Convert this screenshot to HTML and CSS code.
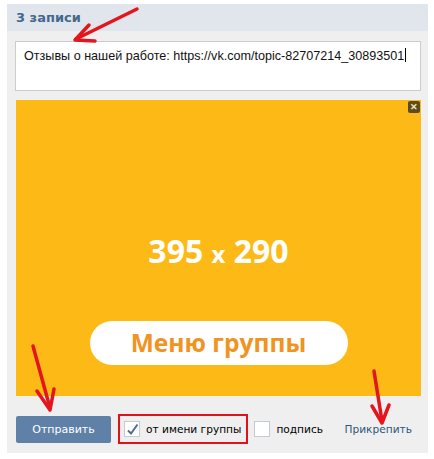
FILE: index.html
```html
<!DOCTYPE html>
<html>
  <head>
    <meta charset="utf-8">
    <title>3 записи</title>
    <link rel="stylesheet" href="styles.css">
  </head>
  <body>
    <div class="panel">
      <div class="panel-head">3 записи</div>
      <div class="panel-body">
        <div class="post-field">Отзывы о нашей работе: https://vk.com/topic-82707214_30893501<span class="caret"></span></div>

        <div class="attach">
          <span class="attach-close">&#x2715;</span>
          <div class="attach-size">395 <span class="attach-x">x</span> 290</div>
          <div class="attach-pill">Меню группы</div>
        </div>

        <div class="controls">
          <button type="button" class="btn-send">Отправить</button>
          <label class="check check-marked">
            <span class="check-box">
              <svg width="15" height="15" viewBox="0 0 15 15"><path d="M3 8.5 L6 11.5 L12.5 2.5" fill="none" stroke="#4b6f99" stroke-width="2"/></svg>
            </span>
            от имени группы
          </label>
          <label class="check">
            <span class="check-box"></span>
            подпись
          </label>
          <a class="attach-link">Прикрепить</a>
        </div>
      </div>
    </div>

    <!-- стрелки поверх скриншота -->
    <svg class="arrows" width="434" height="459" viewBox="0 0 434 459">
      <g fill="none" stroke="#e3161d" stroke-width="3.5" stroke-linecap="round" stroke-linejoin="round">
        <path d="M137 9 L76 39"/>
        <path d="M89 25 L75 40 L95 41"/>
        <path d="M33 346 L50 408"/>
        <path d="M37 391 L50 410 L54 389"/>
        <path d="M374 371 L382 421"/>
        <path d="M372 406 L382 423 L389 405"/>
      </g>
    </svg>
  </body>
</html>
```

FILE: styles.css
```css
html, body, div, button, label{
  margin:0px;
  padding:0px;
}
body{
  background-color:#fff;
  font-family:"Liberation Sans", Arial, sans-serif;
  font-size:12px;
  color:#222;
}
.panel{
  width:421px;
  height:449px;
  margin:4px 0px 0px 7px;
  background-color:#efefef;
}
.panel-head{
  height:27px;
  line-height:28px;
  padding-left:9px;
  background-color:#e1e6ec;
  color:#45688e;
  font-family:"DejaVu Sans", sans-serif;
  font-weight:bold;
  font-size:13px;
}
.panel-body{
  padding:10px 7px 0px 8px;
}
.post-field{
  padding:6px 8px 0px 8px;
  box-sizing:border-box;
  height:50px;
  background-color:#fff;
  border:1px solid #c9cdd2;
  font-size:12.6px;
  line-height:16px;
  color:#111;
  white-space:nowrap;
}
.caret{
  display:inline-block;
  width:1px;
  height:14px;
  margin-left:1px;
  vertical-align:-2px;
  background-color:#000;
}
.attach{
  position:relative;
  margin:9px 0px 0px 1px;
  height:296px;
  background-color:#fdba16;
  display:flex;
  flex-direction:column;
  align-items:center;
}
.attach-close{
  position:absolute;
  top:1px;
  right:1px;
  width:12px;
  height:12px;
  border-radius:2px;
  background-color:#5e4b1c;
  color:#f2e6c8;
  font-size:9px;
  font-weight:bold;
  line-height:12px;
  text-align:center;
}
.attach-size{
  margin-top:131px;
  color:#fff;
  font-family:"Open Sans", sans-serif;
  font-weight:bold;
  font-size:32px;
  line-height:40px;
}
.attach-x{
  font-size:24px;
}
.attach-pill{
  margin-top:47px;
  width:258px;
  height:44px;
  border-radius:22px;
  background-color:#fff;
  color:#f0931f;
  font-family:"Open Sans", sans-serif;
  font-weight:bold;
  font-size:24.5px;
  line-height:44px;
  text-align:center;
}
.controls{
  margin-top:18px;
  display:flex;
  align-items:center;
  font-family:"DejaVu Sans", sans-serif;
  font-size:10.6px;
}
.btn-send{
  width:95px;
  height:27px;
  margin-left:1px;
  border:0px;
  border-radius:2px;
  background-color:#5f81a8;
  color:#fff;
  font-family:"DejaVu Sans", sans-serif;
  font-size:11px;
}
.check{
  display:flex;
  align-items:center;
  gap:6px;
  color:#000;
}
.check-marked{
  margin-left:7px;
  height:26px;
  padding:0px 5px 0px 4px;
  border:2px solid #e0111b;
}
.check-box{
  width:14px;
  height:14px;
  background-color:#fff;
  border:1px solid #c5cbd2;
}
.check-marked + .check{
  margin-left:6px;
}
.attach-link{
  margin-left:auto;
  margin-right:9px;
  color:#2b587a;
}
.arrows{
  position:absolute;
  left:0px;
  top:0px;
}
```
